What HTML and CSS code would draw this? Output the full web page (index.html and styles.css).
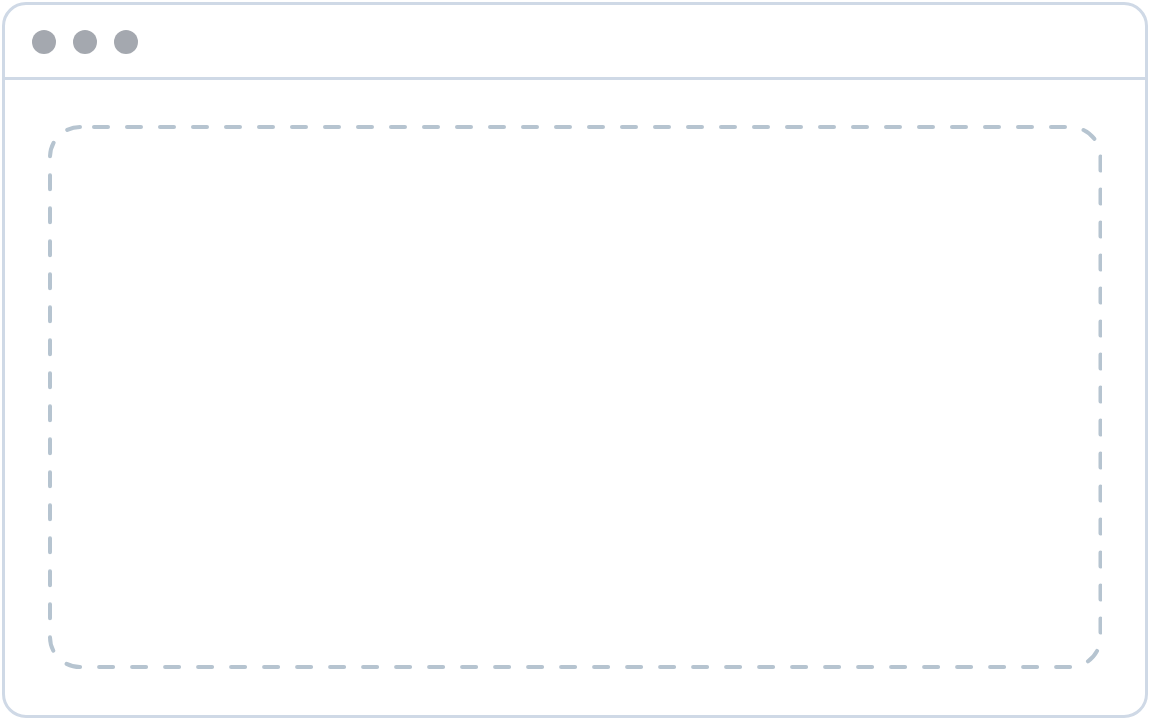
FILE: index.html
```html
<!DOCTYPE html>
<html>
<head>
<meta charset="utf-8">
<link rel="stylesheet" href="styles.css">
</head>
<body>
<div class="window">
  <div class="titlebar">
    <span class="dot"></span>
    <span class="dot"></span>
    <span class="dot"></span>
  </div>
  <div class="content">
    <svg class="drop" xmlns="http://www.w3.org/2000/svg">
      <rect class="drop-rect" x="2" y="2" rx="30" ry="30"></rect>
    </svg>
  </div>
</div>
</body>
</html>
```
FILE: styles.css
```css
html, body {
  margin: 0;
  padding: 0;
  background: #ffffff;
  font-family: "Liberation Sans", Arial, sans-serif;
}
body {
  width: 1150px;
  height: 719px;
  overflow: hidden;
}
.window {
  box-sizing: border-box;
  margin: 2px;
  width: 1146px;
  height: 716px;
  border: 3px solid #cfd9e6;
  border-radius: 24px;
  display: flex;
  flex-direction: column;
  background: #ffffff;
}
.titlebar {
  box-sizing: border-box;
  height: 75px;
  border-bottom: 3px solid #cfd9e6;
  display: flex;
  align-items: center;
  gap: 17px;
  padding: 1px 0 0 27px;
}
.dot {
  width: 24px;
  height: 24px;
  border-radius: 50%;
  background: #a4a8af;
}
.content {
  flex: 1;
  display: flex;
  padding: 45px 43px 46px 42.5px;
}
.drop {
  flex: 1;
  display: block;
}
.drop-rect {
  width: calc(100% - 4px);
  height: calc(100% - 4px);
  fill: none;
  stroke: #b6c4d0;
  stroke-width: 4;
  stroke-linecap: round;
  stroke-dasharray: 14 19;
  stroke-dashoffset: -14;
}
```
